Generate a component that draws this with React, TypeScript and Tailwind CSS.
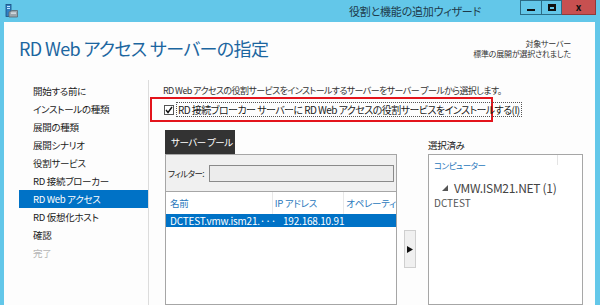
import React from 'react';

const navItems = [
  { label: '開始する前に' },
  { label: 'インストールの種類' },
  { label: '展開の種類' },
  { label: '展開シナリオ' },
  { label: '役割サービス' },
  { label: 'RD 接続ブローカー' },
  { label: 'RD Web アクセス', active: true },
  { label: 'RD 仮想化ホスト' },
  { label: '確認' },
  { label: '完了', disabled: true },
];

function WizardIcon() {
  return (
    <svg width="13" height="14" viewBox="0 0 13 14">
      <rect x="1" y="0.5" width="5" height="12" fill="#2f7fc4" stroke="#1b4f80" strokeWidth="0.8" />
      <rect x="2" y="2" width="3" height="1" fill="#bfe3ff" />
      <rect x="2" y="4" width="3" height="1" fill="#bfe3ff" />
      <path d="M4 8 L7 6.5 L12.5 6.5 L12.5 13 L4 13 Z" fill="#9aa5ad" stroke="#5e6870" strokeWidth="0.8" />
      <rect x="6" y="8.5" width="5" height="1.2" fill="#e6ecf0" />
    </svg>
  );
}

export default function App() {
  return (
    <div className="w-[600px] h-[305px] overflow-hidden bg-[#63c7e9] flex flex-col font-['Noto_Sans_CJK_JP','Noto_Sans',sans-serif] [font-feature-settings:'palt'] text-[#1a1a1a]">
      {/* Title bar */}
      <div className="h-[22px] flex items-start shrink-0">
        <div className="pl-[5px] pt-[4px] w-[200px]">
          <WizardIcon />
        </div>
        <div className="flex-1 text-center text-[11px] leading-[22px] text-[#1d3a4a] tracking-[-0.2px] pl-[118px]">
          役割と機能の追加ウィザード
        </div>
        <div className="flex h-[15px] mr-[4px] ml-[8px]">
          <div className="w-[22px] border border-[#2b6c86] flex items-center justify-center">
            <div className="w-[8px] h-[2px] mt-[4px] bg-[#111]" />
          </div>
          <div className="w-[20px] border border-l-0 border-[#2b6c86] flex items-center justify-center">
            <div className="w-[8px] h-[7px] border-2 border-[#111] border-t-[3px]" />
          </div>
          <div className="w-[34px] bg-[#c75050] border-b border-r border-[#8f3a3a] flex items-center justify-center text-[10px] font-bold text-[#111] leading-none">
            x
          </div>
        </div>
      </div>

      {/* Window body */}
      <div className="flex-1 ml-[4px] mr-[5px] bg-[#fdfdfd] flex flex-col min-h-0">
        {/* Header */}
        <div className="h-[58px] shrink-0 flex justify-between">
          <div className="pl-[15px] pt-[13px] text-[18px] leading-[26px] text-[#1c66a0] tracking-[-0.6px] whitespace-nowrap">
            RD Web アクセス サーバーの指定
          </div>
          <div className="pr-[24px] pt-[17px] text-right text-[8px] leading-[9.5px] text-[#333] tracking-[-0.2px]">
            <div>対象サーバー</div>
            <div>標準の展開が選択されました</div>
          </div>
        </div>

        <div className="flex-1 flex min-h-0">
          {/* Navigation */}
          <div className="w-[145px] shrink-0 border-r border-[#dcdcdc] pl-[15px] pt-[2px] flex flex-col">
            {navItems.map((item) => (
              <div
                key={item.label}
                className={`h-[18px] pl-[14px] text-[9.5px] leading-[18px] tracking-[-0.3px] whitespace-nowrap ${
                  item.active
                    ? 'bg-[#0072c6] text-white'
                    : item.disabled
                    ? 'text-[#b5b5b5]'
                    : 'text-[#1a1a1a]'
                }`}
              >
                {item.label}
              </div>
            ))}
          </div>

          {/* Content */}
          <div className="flex-1 flex flex-col min-w-0">
            <div className="pl-[14px] pt-[4px] h-[17px] text-[9px] leading-[13px] text-[#333] whitespace-nowrap tracking-[-0.6px]">
              RD Web アクセスの役割サービスをインストールするサーバーをサーバー プールから選択します。
            </div>
            <div className="ml-[1px] w-[343px] h-[25px] border-2 border-[#e3141c] flex items-center pl-[12px]">
              <div className="w-[10px] h-[10px] border border-[#555] bg-white flex items-center justify-center shrink-0">
                <svg width="8" height="8" viewBox="0 0 8 8">
                  <path d="M1 4 L3 6.5 L7 1" fill="none" stroke="#111" strokeWidth="1.4" />
                </svg>
              </div>
              <div className="ml-[2px] px-[1px] border border-dotted border-[#555] text-[10px] leading-[13px] whitespace-nowrap tracking-[-0.55px]">
                RD 接続ブローカー サーバーに RD Web アクセスの役割サービスをインストールする(I)
              </div>
            </div>

            <div className="flex-1 flex pl-[16px] pt-[8px] min-h-0">
              {/* Server pool */}
              <div className="w-[232px] flex flex-col shrink-0">
                <div className="w-[70px] h-[24px] bg-[#333333] text-white text-[9.5px] leading-[24px] pl-[6px] whitespace-nowrap tracking-[-0.5px]">
                  サーバー プール
                </div>
                <div className="flex-1 border border-[#a6a6a6] bg-white flex flex-col">
                  <div className="h-[37px] bg-[#f0f0f0] border-b border-[#a6a6a6] flex items-center pl-[2px] pr-[2px]">
                    <span className="text-[8.5px] text-[#222] w-[41px] whitespace-nowrap tracking-[-0.6px]">フィルター:</span>
                    <div className="flex-1 h-[17px] border border-[#8a8a8a] bg-[#ececec]" />
                  </div>
                  <div className="h-[22px] flex text-[9.5px] leading-[22px] text-[#2a78bc] whitespace-nowrap overflow-hidden tracking-[-0.3px]">
                    <div className="w-[112px] pl-[4px] border-r border-[#e8e8e8]">名前</div>
                    <div className="w-[75px] pl-[2px] border-r border-[#e8e8e8]">IP アドレス</div>
                    <div className="pl-[2px]">オペレーティ</div>
                  </div>
                  <div className="h-[13px] bg-[#0072c6] text-white flex items-center text-[10px] leading-[13px] whitespace-nowrap tracking-[-0.2px]">
                    <div className="w-[117px] pl-[4px]">DCTEST.vmw.ism21.···</div>
                    <div>192.168.10.91</div>
                  </div>
                </div>
              </div>

              {/* Arrow */}
              <div className="w-[31px] shrink-0 flex justify-center pt-[100px] pr-[5px]">
                <div className="w-[12px] h-[38px] bg-[#f0f0f0] border border-[#cfcfcf] flex items-center justify-center">
                  <svg width="6" height="7" viewBox="0 0 6 7">
                    <path d="M0 0 L6 3.5 L0 7 Z" fill="#111" />
                  </svg>
                </div>
              </div>

              {/* Selected */}
              <div className="w-[155px] shrink-0 flex flex-col">
                <div className="h-[24px] text-[9.5px] leading-[14px] pt-[8px] text-[#222] tracking-[-0.3px]">選択済み</div>
                <div className="flex-1 border border-[#a6a6a6] bg-white flex flex-col">
                  <div className="h-[20px] flex">
                    <div className="w-[128px] pl-[5px] text-[8.5px] leading-[20px] text-[#2a78bc] tracking-[-0.5px]">コンピューター</div>
                    <div className="w-px h-[10px] bg-[#e4e4e4]" />
                  </div>
                  <div className="pl-[13px] pt-[3px] flex items-center h-[22px]">
                    <svg width="6" height="6" viewBox="0 0 6 6" className="mr-[6px]">
                      <path d="M6 0 L6 6 L0 6 Z" fill="#555" />
                    </svg>
                    <span className="text-[12px] text-[#444] whitespace-nowrap tracking-[-0.3px]">VMW.ISM21.NET (1)</span>
                  </div>
                  <div className="pl-[5px] text-[10px] leading-[12px] text-[#555]">DCTEST</div>
                </div>
              </div>
            </div>
          </div>
        </div>
      </div>
    </div>
  );
}
